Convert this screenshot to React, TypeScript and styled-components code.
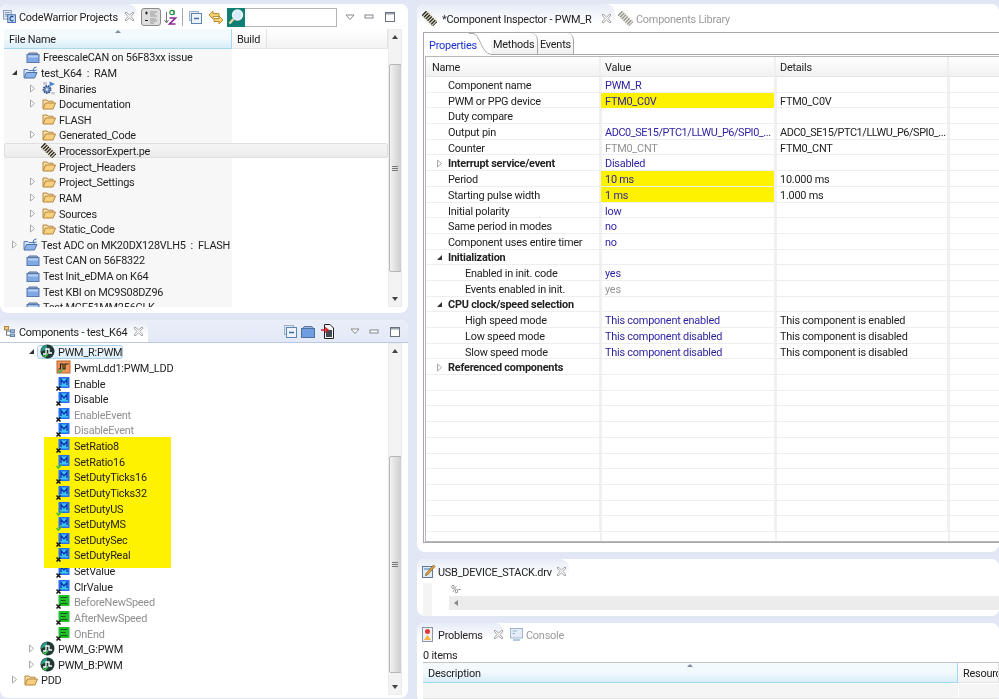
import React from "react";
import styled, { createGlobalStyle } from "styled-components";

const Global = createGlobalStyle`
  html, body { margin: 0; padding: 0; background: #e2e7f6; }
  body { font-family: "Roboto", "Noto Sans", sans-serif; font-size: 10.9px; letter-spacing: -0.22px; color: #1e1e1e; }
  * { box-sizing: border-box; }
  svg { flex: none; }
`;

const Root = styled.div`
  width: 999px; height: 699px; overflow: hidden; background: #e2e7f6; padding-top: 4px;
  display: grid; grid-template-columns: 408px 582px; column-gap: 9px; filter: blur(0.35px);
`;
const Column = styled.div`display: flex; flex-direction: column; gap: 7px; min-width: 0; height: 720px;`;
const Panel = styled.section<{ $h: number }>`
  height: ${p => p.$h}px; flex: none; background: #fff; border-radius: 8px; overflow: hidden;
  display: flex; flex-direction: column;
`;
const Header = styled.div<{ $h: number; $bar?: boolean }>`
  height: ${p => p.$h}px; flex: none; display: flex; align-items: stretch;
  background: ${p => (p.$bar ? "linear-gradient(#e9eef9,#e3e9f7)" : "#fff")};
  border-bottom: ${p => (p.$bar ? "1px solid #bcc8df" : "none")};
`;
const Tab = styled.div<{ $w: number; $pad: number; $gap: number; $active?: boolean }>`
  width: ${p => p.$w}px; flex: none; display: flex; align-items: center; padding-left: ${p => p.$pad}px; gap: ${p => p.$gap}px;
  border-radius: 0 9px 0 0; color: ${p => (p.$active === false ? "#9a9a9a" : "#222")};
  background: ${p => (p.$active === false ? "#fff" : "linear-gradient(#e6ebf6,#fff 70%)")};
`;
const TabLabel = styled.span`white-space: nowrap; flex: none; position: relative; top: 1px;`;
const Spacer = styled.div`flex: 1;`;
const Tools = styled.div`display: flex; align-items: center; padding-top: 1px;`;
const ToggleBtn = styled.div`
  width: 20px; height: 18px; margin-left: 4px; border: 1px solid #8a8a8a; border-radius: 3px; background: #dedede;
  display: flex; align-items: center; justify-content: center;
`;
const ToolSlot = styled.div<{ $w: number }>`width: ${p => p.$w}px; flex: none; display: flex; justify-content: center; align-items: center;`;
const PanelFoot = styled.div<{ $h: number }>`height: ${p => p.$h}px; flex: none;`;
const SearchIcon = styled.div`
  width: 18px; height: 19px; background: #0e7f72; display: flex; align-items: center; justify-content: center;
`;
const SearchInput = styled.div`width: 92px; height: 19px; background: #fff; border: 1px solid #b4b4b4; border-left: none;`;
const Body = styled.div`flex: 1; min-height: 0; display: flex; margin-left: 4px; margin-right: 6px;`;
const TreeArea = styled.div`flex: 1; min-width: 0; display: flex; flex-direction: column; overflow: hidden;`;
const ColHead = styled.div`height: 20px; flex: none; display: flex; `;
const HeadCell = styled.div<{ $w?: number; $sorted?: boolean }>`
  ${p => (p.$w ? `width:${p.$w}px; flex:none;` : "flex:1;")}
  display: flex; align-items: center; padding: 2px 0 0 5px; position: relative; color: #222; white-space: nowrap; overflow: hidden;
  background: ${p => (p.$sorted ? "linear-gradient(#f3fafe 45%,#d8edf9)" : "linear-gradient(#fff,#f3f3f3)")};
  border-right: 1px solid ${p => (p.$sorted ? "#a5d8f2" : "#e3e3e3")};
  border-bottom: 1px solid ${p => (p.$sorted ? "#a5d8f2" : "#e6e6e6")};
`;
const SortMark = styled.span`
  position: absolute; left: 50%; top: 1px; width: 0; height: 0; margin-left: -3px;
  border-left: 3px solid transparent; border-right: 3px solid transparent; border-bottom: 3px solid #7f8c99;
`;
const Rows = styled.div<{ $split?: number; $top: number }>`
  flex: 1; min-height: 0; overflow: hidden; padding-top: ${p => p.$top}px;
  background: ${p => (p.$split ? `linear-gradient(90deg,#f7f7f7 ${p.$split}px,#fff ${p.$split}px)` : "#fff")};
`;
const Row = styled.div<{ $selected?: boolean; $muted?: boolean }>`
  height: 15.63px; display: flex; align-items: center;
  color: ${p => (p.$muted ? "#8f8f8f" : "#1e1e1e")}; position: relative; overflow: visible;
  ${p => p.$selected ? "background: linear-gradient(#f6f6f6,#ebebeb); box-shadow: inset 0 0 0 1px #dfdfdf; border-radius: 3px;" : ""}
`;
const Twisty = styled.span<{ $at: number }>`width: 10px; flex: none; display: flex; justify-content: center; margin: 0 4px 0 ${p => p.$at}px;`;
const IconBox = styled.span`width: 15px; height: 14px; flex: none; display: flex; align-items: center; justify-content: center; margin-right: 3px; position: relative;`;
const Focus = styled.span`
  position: absolute; left: 33px; top: 1px; width: 86px; height: 14px; border: 1px solid #a9d2ee; border-radius: 3px;
  background: linear-gradient(#f1f8fd,#dceefa);
`;
const RowText = styled.span`position: relative; top: 1px; white-space: pre;`;
const Yellow = styled.div`
  background: #fff200; width: 127px; margin: -1px 0 -5px 40px; padding: 1px 0 5px; position: relative; z-index: 1;
`;
const Scroll = styled.div`
  width: 14px; flex: none; background: #f3f3f3; border: 1px solid #ececec; display: flex; flex-direction: column; align-items: center; overflow: hidden;
`;
const Arrow = styled.span<{ $down?: boolean }>`
  width: 0; height: 0; flex: none; margin: 5px 0;
  border-left: 3.5px solid transparent; border-right: 3.5px solid transparent;
  ${p => (p.$down ? "border-top: 4px solid #444;" : "border-bottom: 4px solid #444;")}
`;
const Thumb = styled.div<{ $top: number; $h: number }>`
  width: 13px; height: ${p => p.$h}px; margin-top: ${p => p.$top}px; flex: none; border: 1px solid #b6b6b6; border-radius: 2px;
  background: linear-gradient(90deg,#f2f2f2,#dcdcdc 60%,#cfcfcf);
  display: flex; flex-direction: column; align-items: center; justify-content: center; gap: 1px;
`;
const Grip = styled.span`width: 6px; height: 1px; background: #777;`;
const TrackFill = styled.div`flex: 1;`;

const InspectorBox = styled.div`
  height: 511px; flex: none; margin-left: 6px; border: 1px solid #a8a8a8; border-right: none; display: flex; flex-direction: column; padding-left: 1px;
`;
const SubTabs = styled.div`height: 22px; flex: none; display: flex; align-items: stretch; border-bottom: 1px solid #a8a8a8;`;
const SubTab = styled.div<{ $w: number; $active?: boolean }>`
  width: ${p => p.$w}px; flex: none; display: flex; align-items: center; padding: 2px 0 0 ${p => (p.$active ? 4 : 2)}px; position: relative;
  color: ${p => (p.$active ? "#1a2fd0" : "#222")}; background: ${p => (p.$active ? "#fff" : "linear-gradient(#fff,#f0f0f0)")};
  ${p => (p.$active ? "" : "border-right: 1px solid #a8a8a8; border-top-right-radius: 7px;")}
  ${p => (p.$active ? "margin-bottom: -1px; z-index: 1;" : "")}
`;
const Curve = styled.svg`position: absolute; right: 0; top: 0;`;
const Grid = styled.div`
  flex: 1; min-height: 0; margin-top: 1px; border: 1px solid #b8b8b8; border-right: none; overflow: hidden;
  background:
    linear-gradient(90deg, transparent 174px, #f0f0f0 174px, #f0f0f0 176px, transparent 176px, transparent 349px, #f0f0f0 349px, #f0f0f0 351px, transparent 351px, transparent 522px, #f0f0f0 522px, #f0f0f0 524px, transparent 524px), #fff;
`;
const GridRow = styled.div<{ $head?: boolean }>`
  height: ${p => (p.$head ? 20 : 15.69)}px; display: grid; grid-template-columns: 175px 175px 173px 1fr;
  ${p => (p.$head ? "background: linear-gradient(#fff,#f1f1f1); border-bottom: 1px solid #e6e6e6;" : "border-bottom: 1.5px solid #eeeeee;")}
`;
const NameCell = styled.div<{ $level: number; $bold?: boolean }>`
  display: flex; align-items: center; white-space: nowrap; overflow: hidden; padding: 2px 0 0 ${p => p.$level}px;
  font-weight: ${p => (p.$bold ? 700 : 400)}; color: #222; border-right: 2px solid #f0f0f0;
`;
const ValueCell = styled.div<{ $hl?: boolean; $dim?: boolean; $tight?: boolean }>`
  display: flex; align-items: center; white-space: nowrap; padding: 2px 0 0 4px; min-width: 0;
  letter-spacing: ${p => (p.$tight ? "-0.42px" : "inherit")};
  color: ${p => (p.$dim ? "#929292" : "#2a1fa0")}; background: ${p => (p.$hl ? "#fff200" : "transparent")};
  border-right: 2px solid #f0f0f0;
`;
const DetailCell = styled.div<{ $tight?: boolean }>`
  display: flex; align-items: center; white-space: nowrap; padding: 2px 0 0 4px; color: #222; border-right: 2px solid #f0f0f0; min-width: 0;
  letter-spacing: ${p => (p.$tight ? "-0.42px" : "inherit")};
`;
const EditorBody = styled.div`flex: 1; margin-left: 6px; display: flex; flex-direction: column; background: linear-gradient(90deg,#f4f4f4 9px,#fff 9px);`;
const EditLine = styled.div`height: 13px; flex: none; padding-left: 28px; color: #777; font-size: 10px; display: flex; align-items: center;`;
const HScroll = styled.div`height: 14px; margin-left: 26px; flex: none; background: #ececec; display: flex; align-items: center; padding-left: 5px;`;
const LeftArrow = styled.span`width: 0; height: 0; border-top: 3px solid transparent; border-bottom: 3px solid transparent; border-right: 4px solid #8a8a8a;`;
const Items = styled.div`height: 17px; margin-left: 6px; flex: none; display: flex; align-items: center; padding-top: 4px;`;
const ProblemHead = styled.div`height: 21px; margin-left: 6px; flex: none; display: flex; border-top: 1px solid #c4c4c4;`;
const ProblemRow = styled.div`height: 15px; margin: 1px 0 0 6px; flex: none; background: linear-gradient(90deg,#f5f5f5 535px,#fff 535px,#fff 536px,#f5f5f5 536px); border-bottom: 1px solid #e4e4e4;`;
const TwSlot = styled.span`width: 22px; flex: none; display: flex; justify-content: flex-start; padding-left: 10px;`;

const TwistyIcon = ({ open }: { open?: boolean }) => (
  <svg width="7" height="9" viewBox="0 0 7 9">
    {open ? <path d="M1 7 L6 7 L6 2 Z" fill="#333" /> : <path d="M1.5 1 L5.5 4.5 L1.5 8 Z" fill="#fff" stroke="#a8a8a8" />}
  </svg>
);
const FolderOpen = () => (
  <svg width="14" height="12" viewBox="0 0 14 12">
    <path d="M1 10.5 V2 H5 L6 3.2 H11 V5" fill="#f8e3ae" stroke="#b8863a" />
    <path d="M1 11 L3.5 5 H13.5 L11 11 Z" fill="#f6cf80" stroke="#b8863a" />
  </svg>
);
const ProjectClosed = () => (
  <svg width="14" height="12" viewBox="0 0 14 12">
    <path d="M3 2 H11 L12 3.5 H2 Z" fill="#9db7dd" stroke="#566f96" />
    <rect x="1" y="3.5" width="12" height="8" fill="#7fa8e6" stroke="#5a78a8" />
    <rect x="2" y="4.5" width="10" height="2" fill="#b5cff3" />
  </svg>
);
const ProjectOpen = () => (
  <svg width="15" height="13" viewBox="0 0 15 13">
    <path d="M1 11 V3.5 H5 L6 4.5 H11 V6" fill="#d5e5fa" stroke="#5b7cae" />
    <path d="M1 12 L3.5 6.5 H14 L11.5 12 Z" fill="#8cb4ea" stroke="#4f70a5" />
    <path d="M10 4 Q10.5 1 13.5 1 M10 4 Q11 5 13.5 4" fill="none" stroke="#3a6fb8" strokeWidth="1" />
  </svg>
);
const Binaries = () => (
  <svg width="15" height="14" viewBox="0 0 15 14">
    <circle cx="6" cy="8.5" r="3.6" fill="#6f8fc0" stroke="#2d4a7a" strokeDasharray="1.5 1" strokeWidth="1.6" />
    <circle cx="6" cy="8.5" r="1.2" fill="#dfe8f5" />
    <path d="M8.5 0.5 L14 3 L8.5 5.5 Z" fill="#4c83cf" />
    <path d="M3 1 V4 M5 1 V4 M11 11 V13.5 M13 11 V13.5" stroke="#9aa6b8" strokeWidth="1" />
  </svg>
);
const Chip = ({ dim }: { dim?: boolean }) => (
  <svg width="15" height="15" viewBox="0 0 15 15" opacity={dim ? 0.5 : 1}>
    <g transform="rotate(-45 7.5 7.5)">
      <rect x="4.5" y="-0.5" width="6" height="16" fill="#2d2d2d" />
      <path d="M3 1.5 H12 M3 4 H12 M3 6.5 H12 M3 9 H12 M3 11.5 H12 M3 14 H12" stroke="#e6e0c4" strokeWidth="1.1" />
    </g>
  </svg>
);
const Badge = ({ ok }: { ok?: boolean }) => ok
  ? <path d="M0.5 12 L2.5 14 L6 10" fill="none" stroke="#35b548" strokeWidth="1.5" />
  : <path d="M0.5 10.5 L4.5 14.5 M4.5 10.5 L0.5 14.5" stroke="#111" strokeWidth="1.5" />;
const MethodIcon = ({ ok }: { ok?: boolean }) => (
  <svg width="15" height="15" viewBox="0 0 15 15">
    <rect x="2.5" y="1" width="11" height="11" fill="#2a6cf0" />
    <rect x="4" y="2.5" width="8" height="8" fill="#3cc4f5" />
    <path d="M5 9 V3.5 L8 7 L11 3.5 V9" fill="none" stroke="#0a2fb0" strokeWidth="1.3" />
    <Badge ok={ok} />
  </svg>
);
const EventIcon = () => (
  <svg width="15" height="15" viewBox="0 0 15 15">
    <rect x="2.5" y="1" width="11" height="11" fill="#22c02a" />
    <path d="M4.5 3.5 H11.5 M4.5 6.5 H9.5 M4.5 9.5 H11.5" stroke="#0e5d16" strokeWidth="1.2" />
    <Badge />
  </svg>
);
const BeanIcon = () => (
  <svg width="15" height="15" viewBox="0 0 15 15">
    <circle cx="7.5" cy="7.5" r="7" fill="#1f3a35" />
    <path d="M1 7.5 A6.5 6.5 0 0 1 7 1 L7 5 Z" fill="#2e9a86" />
    <path d="M3 10 H6 V5 H9 V9 H12" fill="none" stroke="#fff" strokeWidth="1.3" />
    <path d="M3 11 L5 13 L8 9.5" fill="none" stroke="#49c95c" strokeWidth="1.4" />
  </svg>
);
const LddIcon = () => (
  <svg width="15" height="14" viewBox="0 0 15 14">
    <rect x="1" y="1" width="13" height="12" fill="#f0945a" stroke="#b9652e" />
    <path d="M2.5 9 H4.5 V4 H7 V9 H9 V4 H12.5" fill="none" stroke="#221" strokeWidth="1.2" />
    <path d="M2 10.5 L3.8 12.5 L7 9" fill="none" stroke="#35b548" strokeWidth="1.3" />
  </svg>
);
const CloseX = () => (
  <svg width="11" height="11" viewBox="0 0 11 11">
    <path d="M2 1 L5.5 4 L9 1 L10 2 L7 5.5 L10 9 L9 10 L5.5 7 L2 10 L1 9 L4 5.5 L1 2 Z" fill="#fff" stroke="#9a9a9a" strokeWidth="0.9" />
  </svg>
);
const ViewMenu = () => (
  <svg width="10" height="7" viewBox="0 0 10 7"><path d="M1 1 H9 L5 5.5 Z" fill="#fff" stroke="#8a8a8a" /></svg>
);
const Minimize = () => (
  <svg width="10" height="6" viewBox="0 0 10 6"><rect x="1" y="1" width="8" height="3" fill="#fff" stroke="#808890" /></svg>
);
const Maximize = () => (
  <svg width="10" height="10" viewBox="0 0 10 10"><rect x="0.5" y="0.5" width="9" height="9" fill="#fff" stroke="#6a7280" /><rect x="1" y="1" width="8" height="1.5" fill="#9aa2ae" /></svg>
);
const ProjectsIcon = () => (
  <svg width="13" height="15" viewBox="0 0 15 17">
    <rect x="0.5" y="1.5" width="9" height="10" fill="#e7eef8" stroke="#7e93b3" />
    <path d="M2 4 H8 M2 6 H6 M2 8 H8" stroke="#6b87ad" />
    <rect x="5.5" y="6.5" width="9" height="9" fill="#b9d3f2" stroke="#34639f" />
    <path d="M12 9 A2.5 2.5 0 1 0 12 13" fill="none" stroke="#1b3f80" strokeWidth="1.2" />
  </svg>
);
const ComponentsIcon = () => (
  <svg width="13" height="11" viewBox="0 0 13 13">
    <rect x="0.5" y="0.5" width="5" height="4" fill="#f2c879" stroke="#a57c2d" />
    <rect x="7.5" y="4.5" width="5" height="3" fill="#9fc0e6" stroke="#54759f" />
    <rect x="7.5" y="9.5" width="5" height="3" fill="#9fc0e6" stroke="#54759f" />
    <path d="M3 5 V11 H7.5 M3 6 H7.5" fill="none" stroke="#566" />
  </svg>
);
const EditorIcon = () => (
  <svg width="14" height="14" viewBox="0 0 14 14">
    <rect x="0.5" y="2.5" width="10" height="11" fill="#dfeaf7" stroke="#5e7896" />
    <path d="M2 5 H8" stroke="#4279b5" />
    <path d="M4 9.5 L11.5 1 L13 2.5 L5.5 11 L3.5 11.5 Z" fill="#e0a23c" stroke="#7a5a1e" strokeWidth="0.7" />
  </svg>
);
const ProblemsIcon = () => (
  <svg width="11" height="15" viewBox="0 0 11 15">
    <rect x="0.5" y="0.5" width="10" height="14" fill="#eef1f5" stroke="#8d97a5" />
    <circle cx="5.5" cy="4.5" r="2.5" fill="#e03a30" />
    <path d="M5.5 8 L9 13 H2 Z" fill="#f2b63c" />
  </svg>
);
const ConsoleIcon = () => (
  <svg width="13" height="13" viewBox="0 0 13 13" opacity="0.55">
    <rect x="0.5" y="0.5" width="12" height="9.5" fill="#cfe0f2" stroke="#4e7aa8" />
    <path d="M2.5 3 H7 M2.5 5.5 H5" stroke="#4e7aa8" />
    <path d="M3 12 H10" stroke="#4e7aa8" strokeWidth="1.5" />
  </svg>
);
const ToggleIcon = () => (
  <svg width="14" height="14" viewBox="0 0 14 14">
    <path d="M1 3 H4 M2.5 1.5 V4.5 M1 10.5 H4" stroke="#222" />
    <path d="M6 2 H13 M6 4 H11 M6 6 H13 M6 9 H12 M6 11 H13 M6 13 H10" stroke="#999" />
  </svg>
);
const SortIcon = () => (
  <svg width="13" height="18" viewBox="0 0 13 18">
    <path d="M2.5 4 V14 M0.5 12 L2.5 15 L4.5 12" fill="none" stroke="#777" />
    <circle cx="8" cy="4.5" r="2.2" fill="none" stroke="#268f3f" strokeWidth="1.2" />
    <path d="M10 2.5 V7" stroke="#268f3f" strokeWidth="1.2" />
    <path d="M5.5 10 H11.5 L5.5 16 H11.5" fill="none" stroke="#8a2b96" strokeWidth="1.6" />
  </svg>
);
const CollapseIcon = () => (
  <svg width="13" height="13" viewBox="0 0 13 13">
    <rect x="0.5" y="0.5" width="9" height="9" fill="#dce6f2" stroke="#9fb1c7" />
    <rect x="2.5" y="2.5" width="10" height="10" fill="#eef3f9" stroke="#5f84ad" />
    <path d="M5 7.5 H10" stroke="#3a6ca6" strokeWidth="1.5" />
  </svg>
);
const SyncIcon = () => (
  <svg width="16" height="15" viewBox="0 0 16 15">
    <path d="M1 5 L5 1 V3.5 H11 V6.5 H5 V9 Z" fill="#f6d36e" stroke="#b3832a" strokeWidth="0.9" />
    <path d="M15 10 L11 14 V11.5 H6 V8.5 H11 V6 Z" fill="#f6d36e" stroke="#b3832a" strokeWidth="0.9" />
  </svg>
);
const MagnifierIcon = () => (
  <svg width="16" height="16" viewBox="0 0 16 16">
    <circle cx="9.5" cy="6" r="5" fill="#d7ecfa" stroke="#f1f4f6" strokeWidth="1.4" />
    <path d="M5.5 10 L1.5 14.5" stroke="#e9d9a8" strokeWidth="2.4" />
  </svg>
);
const FolderTool = () => (
  <svg width="14" height="13" viewBox="0 0 14 13">
    <path d="M3 1.5 H11 L12.5 3.5 H1.5 Z" fill="#9db7dd" stroke="#5d78a4" />
    <rect x="0.5" y="3.5" width="13" height="9" fill="#6f9ee2" stroke="#4f6f9f" />
  </svg>
);
const DocTool = () => (
  <svg width="13" height="15" viewBox="0 0 13 15">
    <path d="M3.5 0.5 H9 L12.5 4 V14.5 H3.5 Z" fill="#f4f4f4" stroke="#222" />
    <rect x="5" y="6" width="6" height="7" fill="#3f4a55" />
    <path d="M0 6 H6 M4 3.5 L7 6 L4 8.5" fill="none" stroke="#d3202a" strokeWidth="1.5" />
  </svg>
);

type IconKind = "folder" | "closed" | "open" | "bin" | "chip" | "mx" | "mok" | "ev" | "bean" | "ldd";
const icons: Record<IconKind, React.ReactNode> = {
  folder: <FolderOpen />, closed: <ProjectClosed />, open: <ProjectOpen />, bin: <Binaries />, chip: <Chip />,
  mx: <MethodIcon />, mok: <MethodIcon ok />, ev: <EventIcon />, bean: <BeanIcon />, ldd: <LddIcon />,
};

type Node = { label: string; icon: IconKind; indent: number; tw?: "o" | "c"; muted?: boolean; selected?: boolean; focus?: boolean };

const TreeRow = ({ n, shift = 0 }: { n: Node; shift?: number }) => (
  <Row $selected={n.selected} $muted={n.muted}>
    {n.focus && <Focus />}
    <Twisty $at={n.indent - shift}>{n.tw ? <TwistyIcon open={n.tw === "o"} /> : null}</Twisty>
    <IconBox>{icons[n.icon]}</IconBox>
    <RowText>{n.label}</RowText>
  </Row>
);

const projectRows: Node[] = [
  { label: "FreescaleCAN on 56F83xx issue", icon: "closed", indent: 7 },
  { label: "test_K64  :  RAM", icon: "open", indent: 5, tw: "o" },
  { label: "Binaries", icon: "bin", indent: 23, tw: "c" },
  { label: "Documentation", icon: "folder", indent: 23, tw: "c" },
  { label: "FLASH", icon: "folder", indent: 23 },
  { label: "Generated_Code", icon: "folder", indent: 23, tw: "c" },
  { label: "ProcessorExpert.pe", icon: "chip", indent: 23, selected: true },
  { label: "Project_Headers", icon: "folder", indent: 23 },
  { label: "Project_Settings", icon: "folder", indent: 23, tw: "c" },
  { label: "RAM", icon: "folder", indent: 23, tw: "c" },
  { label: "Sources", icon: "folder", indent: 23, tw: "c" },
  { label: "Static_Code", icon: "folder", indent: 23, tw: "c" },
  { label: "Test ADC on MK20DX128VLH5  :  FLASH", icon: "open", indent: 5, tw: "c" },
  { label: "Test CAN on 56F8322", icon: "closed", indent: 7 },
  { label: "Test Init_eDMA on K64", icon: "closed", indent: 7 },
  { label: "Test KBI on MC9S08DZ96", icon: "closed", indent: 7 },
  { label: "Test MCF51MM256CLK", icon: "closed", indent: 7 },
];

const M = (label: string, ok?: boolean, muted?: boolean): Node => ({ label, icon: ok ? "mok" : "mx", indent: 38, muted });
const compBefore: Node[] = [
  { label: "PWM_R:PWM", icon: "bean", indent: 22, tw: "o", focus: true },
  { label: "PwmLdd1:PWM_LDD", icon: "ldd", indent: 38 },
  M("Enable"), M("Disable"), M("EnableEvent", false, true), M("DisableEvent", false, true),
];
const compYellow: Node[] = [
  M("SetRatio8"), M("SetRatio16", true), M("SetDutyTicks16"), M("SetDutyTicks32"),
  M("SetDutyUS", true), M("SetDutyMS", true), M("SetDutySec"), M("SetDutyReal"),
];
const compAfter: Node[] = [
  M("SetValue"), M("ClrValue"),
  { label: "BeforeNewSpeed", icon: "ev", indent: 38, muted: true },
  { label: "AfterNewSpeed", icon: "ev", indent: 38, muted: true },
  { label: "OnEnd", icon: "ev", indent: 38, muted: true },
  { label: "PWM_G:PWM", icon: "bean", indent: 22, tw: "c" },
  { label: "PWM_B:PWM", icon: "bean", indent: 22, tw: "c" },
  { label: "PDD", icon: "folder", indent: 5, tw: "c" },
];

type Prop = { name?: string; lvl?: number; tw?: "o" | "c"; bold?: boolean; value?: string; hl?: boolean; dim?: boolean; detail?: string; tight?: boolean };
const LONG = "ADC0_SE15/PTC1/LLWU_P6/SPI0_...";
const props: Prop[] = [
  { name: "Component name", value: "PWM_R" },
  { name: "PWM or PPG device", value: "FTM0_C0V", hl: true, detail: "FTM0_C0V" },
  { name: "Duty compare" },
  { name: "Output pin", value: LONG, detail: LONG, tight: true },
  { name: "Counter", value: "FTM0_CNT", dim: true, detail: "FTM0_CNT" },
  { name: "Interrupt service/event", tw: "c", bold: true, value: "Disabled" },
  { name: "Period", value: "10 ms", hl: true, detail: "10.000 ms" },
  { name: "Starting pulse width", value: "1 ms", hl: true, detail: "1.000 ms" },
  { name: "Initial polarity", value: "low" },
  { name: "Same period in modes", value: "no" },
  { name: "Component uses entire timer", value: "no" },
  { name: "Initialization", tw: "o", bold: true },
  { name: "Enabled in init. code", lvl: 1, value: "yes" },
  { name: "Events enabled in init.", lvl: 1, value: "yes", dim: true },
  { name: "CPU clock/speed selection", tw: "o", bold: true },
  { name: "High speed mode", lvl: 1, value: "This component enabled", detail: "This component is enabled" },
  { name: "Low speed mode", lvl: 1, value: "This component disabled", detail: "This component is disabled" },
  { name: "Slow speed mode", lvl: 1, value: "This component disabled", detail: "This component is disabled" },
  { name: "Referenced components", tw: "c", bold: true },
  ...Array.from({ length: 10 }, () => ({} as Prop)),
];

const WinButtons = () => (
  <>
    <ToolSlot $w={25}><ViewMenu /></ToolSlot>
    <ToolSlot $w={14}><Minimize /></ToolSlot>
    <ToolSlot $w={27}><Maximize /></ToolSlot>
  </>
);

const VScroll = ({ top, h }: { top: number; h: number }) => (
  <Scroll>
    <Arrow />
    <Thumb $top={top} $h={h}><Grip /><Grip /><Grip /></Thumb>
    <TrackFill />
    <Arrow $down />
  </Scroll>
);

export default function App() {
  return (
    <>
      <Global />
      <Root>
        <Column>
          <Panel $h={309}>
            <Header $h={25}>
              <Tab $w={137} $pad={3} $gap={3}>
                <ProjectsIcon />
                <TabLabel>CodeWarrior Projects</TabLabel>
                <Spacer />
                <CloseX />
                <ToolSlot $w={1} />
              </Tab>
              <Tools>
                <ToggleBtn><ToggleIcon /></ToggleBtn>
                <ToolSlot $w={18}><SortIcon /></ToolSlot>
                <ToolSlot $w={6}><svg width="1" height="18"><rect width="1" height="18" fill="#a8a8a8" /></svg></ToolSlot>
                <ToolSlot $w={20}><CollapseIcon /></ToolSlot>
                <ToolSlot $w={22}><SyncIcon /></ToolSlot>
                <SearchIcon><MagnifierIcon /></SearchIcon>
                <SearchInput />
                <WinButtons />
              </Tools>
            </Header>
            <Body>
              <TreeArea>
                <ColHead>
                  <HeadCell $w={228} $sorted>File Name<SortMark /></HeadCell>
                  <HeadCell $w={35}>Build</HeadCell>
                  <HeadCell />
                </ColHead>
                <Rows $split={228} $top={0}>
                  {projectRows.map(n => <TreeRow key={n.label} n={n} />)}
                </Rows>
              </TreeArea>
              <VScroll top={20} h={208} />
            </Body>
            <PanelFoot $h={6} />
          </Panel>
          <Panel $h={378}>
            <Header $h={23} $bar>
              <Tab $w={148} $pad={3} $gap={3}>
                <ComponentsIcon />
                <TabLabel>Components - test_K64</TabLabel>
                <Spacer />
                <CloseX />
                <ToolSlot $w={3} />
              </Tab>
              <Spacer />
              <Tools>
                <ToolSlot $w={18}><CollapseIcon /></ToolSlot>
                <ToolSlot $w={18}><FolderTool /></ToolSlot>
                <ToolSlot $w={20}><DocTool /></ToolSlot>
                <ToolSlot $w={5} />
                <WinButtons />
              </Tools>
            </Header>
            <Body>
              <TreeArea>
                <Rows $top={1}>
                  {compBefore.map(n => <TreeRow key={n.label} n={n} />)}
                  <Yellow>
                    {compYellow.map(n => <TreeRow key={n.label} n={n} shift={40} />)}
                  </Yellow>
                  {compAfter.map(n => <TreeRow key={n.label} n={n} />)}
                </Rows>
              </TreeArea>
              <VScroll top={98} h={217} />
            </Body>
            <PanelFoot $h={3} />
          </Panel>
        </Column>
        <Column>
          <Panel $h={548}>
            <Header $h={28}>
              <Tab $w={198} $pad={5} $gap={5}>
                <Chip />
                <TabLabel>*Component Inspector - PWM_R</TabLabel>
                <Spacer />
                <CloseX />
                <ToolSlot $w={1} />
              </Tab>
              <Tab $w={130} $pad={3} $gap={3} $active={false}>
                <Chip dim />
                <TabLabel>Components Library</TabLabel>
              </Tab>
            </Header>
            <InspectorBox>
              <SubTabs>
                <SubTab $w={66} $active>
                  Properties
                  <Curve width="22" height="22" viewBox="0 0 22 22"><path d="M0 0.5 H4 C11 1 12 20 22 21.5" fill="none" stroke="#a8a8a8" /></Curve>
                </SubTab>
                <SubTab $w={47}>Methods</SubTab>
                <SubTab $w={36}>Events</SubTab>
              </SubTabs>
              <Grid>
                <GridRow $head>
                  <NameCell $level={6}>Name</NameCell>
                  <DetailCell>Value</DetailCell>
                  <DetailCell>Details</DetailCell>
                  <div />
                </GridRow>
                {props.map((p, i) => (
                  <GridRow key={i}>
                    <NameCell $level={p.tw ? 0 : p.lvl ? 39 : 22} $bold={p.bold}>
                      {p.tw && <TwSlot><TwistyIcon open={p.tw === "o"} /></TwSlot>}
                      {p.name}
                    </NameCell>
                    <ValueCell $hl={p.hl} $dim={p.dim} $tight={p.tight}>{p.value}</ValueCell>
                    <DetailCell $tight={p.tight}>{p.detail}</DetailCell>
                    <div />
                  </GridRow>
                ))}
              </Grid>
            </InspectorBox>
          </Panel>
          <Panel $h={57}>
            <Header $h={24}>
              <Tab $w={152} $pad={5} $gap={2}>
                <EditorIcon />
                <TabLabel>USB_DEVICE_STACK.drv</TabLabel>
                <Spacer />
                <CloseX />
                <ToolSlot $w={3} />
              </Tab>
            </Header>
            <EditorBody>
              <EditLine>%-</EditLine>
              <HScroll><LeftArrow /></HScroll>
            </EditorBody>
          </Panel>
          <Panel $h={80}>
            <Header $h={22}>
              <Tab $w={87} $pad={5} $gap={5}>
                <ProblemsIcon />
                <TabLabel>Problems</TabLabel>
                <Spacer />
                <CloseX />
                <ToolSlot $w={1} />
              </Tab>
              <Tab $w={70} $pad={6} $gap={3} $active={false}>
                <ConsoleIcon />
                <TabLabel>Console</TabLabel>
              </Tab>
            </Header>
            <Items>0 items</Items>
            <ProblemHead>
              <HeadCell $w={535} $sorted>Description<SortMark /></HeadCell>
              <HeadCell>Resource</HeadCell>
            </ProblemHead>
            <ProblemRow />
          </Panel>
        </Column>
      </Root>
    </>
  );
}
